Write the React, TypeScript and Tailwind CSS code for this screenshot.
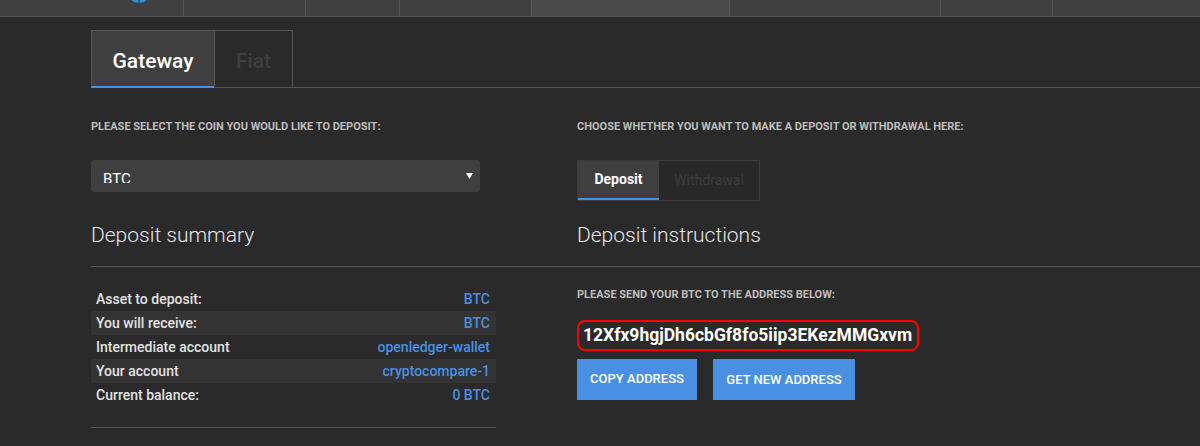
import React from "react";

const navWidths = [183, 122, 94, 132, 198, 211, 112, 148];

const rows: [string, string][] = [
  ["Asset to deposit:", "BTC"],
  ["You will receive:", "BTC"],
  ["Intermediate account", "openledger-wallet"],
  ["Your account", "cryptocompare-1"],
  ["Current balance:", "0 BTC"],
];

export default function App() {
  return (
    <div
      className="w-[1200px] h-[446px] overflow-hidden bg-[#2a2a2a] text-white"
      style={{ fontFamily: "Roboto, 'Noto Sans', Arial, sans-serif" }}
    >
      {/* top nav */}
      <div className="flex h-[17px] border-b border-[#555]">
        {navWidths.map((w, i) => (
          <div
            key={i}
            style={{ width: w }}
            className={`h-full ${i > 0 ? "border-l border-[#555]" : ""} ${
              i === 4 ? "bg-[#4a4a4a]" : "bg-[#404040]"
            } ${i === 0 ? "flex justify-end pr-[36px]" : ""}`}
          >
            {i === 0 && (
              <svg width="16" height="3" viewBox="0 0 16 3">
                <path d="M0.5 0 A7.5 7.5 0 0 0 7.3 2.6 L7.3 0 Z" fill="#1b9ce2" />
                <path d="M15.5 0 A7.5 7.5 0 0 1 8.7 2.6 L8.7 0 Z" fill="#1b9ce2" />
              </svg>
            )}
          </div>
        ))}
      </div>

      <div className="pl-[91px] pt-[13px]">
        {/* tabs */}
        <div className="flex items-end">
          <div className="w-[123px] h-[58px] bg-[#3f3f3f] border-t border-l border-[#555] border-b-2 border-b-[#4a90e2] flex items-center justify-center pt-[6px] text-[21px] font-medium text-white">
            Gateway
          </div>
          <div className="w-[79px] h-[58px] border-t border-x border-b border-[#555] flex items-center justify-center pt-[6px] text-[21px] font-medium text-[#3e3e3e]">
            Fiat
          </div>
          <div className="flex-1 border-b border-[#555]" />
        </div>

        {/* row 1 */}
        <div className="flex pt-[32px]">
          <div className="w-[486px]">
            <div className="text-[11px] leading-[13px] font-bold text-[#bdbdbd]">
              PLEASE SELECT THE COIN YOU WOULD LIKE TO DEPOSIT:
            </div>
            <div className="mt-[27px] w-[389px] h-[32px] rounded-[4px] bg-[#3f3f3f] flex items-start justify-between pl-[12px] pr-[7px]">
              <div className="h-[23px] overflow-hidden pt-[10px]">
                <div className="text-[15px] leading-[18px] text-white">BTC</div>
              </div>
              <svg className="mt-[13px]" width="7" height="6" viewBox="0 0 7 6">
                <path d="M0 0 L7 0 L3.5 6 Z" fill="#fff" />
              </svg>
            </div>
          </div>
          <div className="flex-1">
            <div className="text-[11px] leading-[13px] font-bold text-[#bdbdbd]">
              CHOOSE WHETHER YOU WANT TO MAKE A DEPOSIT OR WITHDRAWAL HERE:
            </div>
            <div className="mt-[27px] flex w-fit border border-[#3c3c3c]">
              <div className="w-[81px] h-[39px] bg-[#3f3f3f] border-b-2 border-[#4a90e2] flex items-center justify-center text-[14px] font-bold text-white">
                Deposit
              </div>
              <div className="w-[100px] h-[39px] bg-[#282828] flex items-center justify-center text-[14px] text-[#3c3c3c]">
                Withdrawal
              </div>
            </div>
          </div>
        </div>

        {/* row 2 headings */}
        <div className="flex mt-[21px] pb-[18px] border-b border-[#555]">
          <div className="w-[486px] text-[21px] leading-[26px] font-light text-[#e6e6e6]">
            Deposit summary
          </div>
          <div className="flex-1 text-[21px] leading-[26px] font-light text-[#e6e6e6]">
            Deposit instructions
          </div>
        </div>

        {/* row 3 */}
        <div className="flex pt-[20px]">
          <div className="w-[486px]">
            <div className="w-[405px]">
              {rows.map(([k, v], i) => (
                <div
                  key={k}
                  className={`h-[24px] flex items-center justify-between pl-[5px] pr-[6px] text-[14px] ${
                    i % 2 === 1 ? "bg-[#333333]" : ""
                  }`}
                >
                  <span className="font-medium text-[#e2e2e2]">{k}</span>
                  <span className="font-medium text-[#4a90e2]">{v}</span>
                </div>
              ))}
            </div>
            <div className="w-[405px] mt-[20px] border-t border-[#555]" />
          </div>
          <div className="flex-1">
            <div className="text-[11px] leading-[13px] font-bold text-[#bdbdbd] mt-[1px]">
              PLEASE SEND YOUR BTC TO THE ADDRESS BELOW:
            </div>
            <div className="mt-[19px] w-fit h-[31px] border-2 border-[#ff0000] rounded-[8px] pl-[4px] pr-[5px] flex items-center text-[17.5px] font-bold text-white">
              12Xfx9hgjDh6cbGf8fo5iip3EKezMMGxvm
            </div>
            <div className="mt-[8px] flex gap-[16px]">
              <div className="w-[120px] h-[41px] bg-[#4a90e2] flex items-center justify-center text-[13px] font-medium text-white pb-[2px]">
                COPY ADDRESS
              </div>
              <div className="w-[142px] h-[41px] bg-[#4a90e2] flex items-center justify-center text-[13px] font-medium text-white">
                GET NEW ADDRESS
              </div>
            </div>
          </div>
        </div>
      </div>
    </div>
  );
}
